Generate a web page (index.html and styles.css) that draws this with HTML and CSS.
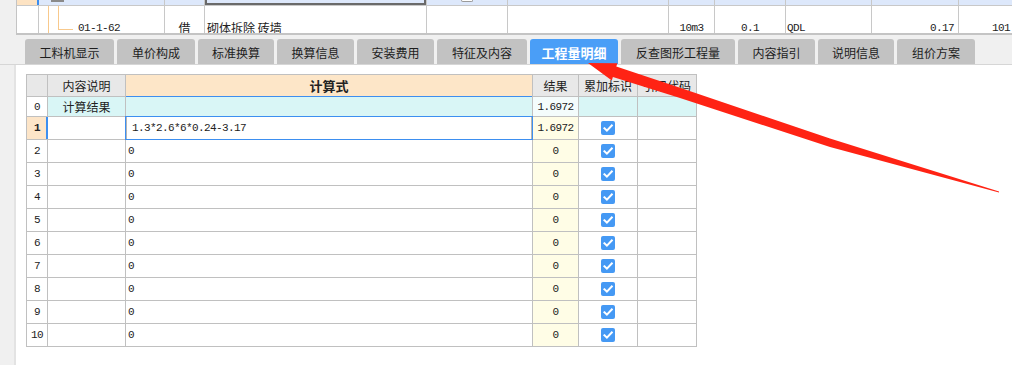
FILE: index.html
```html
<!DOCTYPE html>
<html lang="zh-CN">
<head>
<meta charset="utf-8">
<title>工程量明细</title>
<link rel="stylesheet" href="styles.css">
</head>
<body>
<div class="top-grid">
  <div class="g-row g-row-sel">
    <div class="c w1 c1-sel"></div>
    <div class="c w2"><span class="collapse-box"></span></div>
    <div class="c w3"></div>
    <div class="c w4 c4-edit"></div>
    <div class="c w5"><span class="mini-check"></span></div>
    <div class="c w6"></div>
    <div class="c w7"></div>
    <div class="c w8"></div>
    <div class="c w9"></div>
    <div class="c w10"></div>
    <div class="c w11"></div>
  </div>
  <div class="g-row g-row-main">
    <div class="c w1"></div>
    <div class="c w2 tree-cell"><span class="tree-v"></span><span class="tree-elbow"></span><span class="mono tree-text">01-1-62</span></div>
    <div class="c w3 center">借</div>
    <div class="c w4 pl2">砌体拆除 砖墙</div>
    <div class="c w5"></div>
    <div class="c w6"></div>
    <div class="c w7 center mono">10m3</div>
    <div class="c w8 center mono">0.1</div>
    <div class="c w9 mono pl1">QDL</div>
    <div class="c w10 right mono pr4">0.17</div>
    <div class="c w11 right mono pr2">101</div>
  </div>
</div>

<div class="tabs">
  <div class="tab t1">工料机显示</div>
  <div class="tab t2">单价构成</div>
  <div class="tab t3">标准换算</div>
  <div class="tab t4">换算信息</div>
  <div class="tab t5">安装费用</div>
  <div class="tab t6">特征及内容</div>
  <div class="tab t7 active">工程量明细</div>
  <div class="tab t8">反查图形工程量</div>
  <div class="tab t9">内容指引</div>
  <div class="tab t10">说明信息</div>
  <div class="tab t11">组价方案</div>
</div>

<div class="panel">
  <div class="sheet">
    <div class="h"></div>
    <div class="h">内容说明</div>
    <div class="h h-formula">计算式</div>
    <div class="h">结果</div>
    <div class="h">累加标识</div>
    <div class="h">引用代码</div>

    <div class="rn mono">0</div>
    <div class="cell r0 center">计算结果</div>
    <div class="cell r0"></div>
    <div class="cell r0-res mono center">1.6972</div>
    <div class="cell r0"></div>
    <div class="cell r0"></div>

    <div class="rn rn-cur mono">1</div>
    <div class="cell"></div>
    <div class="cell formula-edit mono">1.3*2.6*6*0.24-3.17</div>
    <div class="cell res mono center">1.6972</div>
    <div class="cell center"><svg class="chk" viewBox="0 0 14 14"><rect width="14" height="14" rx="2"/><path d="M3.4 7.3 L5.9 9.7 L10.8 4.5"/></svg></div>
    <div class="cell"></div>

    <div class="rn mono">2</div><div class="cell"></div><div class="cell formula mono">0</div><div class="cell res mono center">0</div><div class="cell center"><svg class="chk" viewBox="0 0 14 14"><rect width="14" height="14" rx="2"/><path d="M3.4 7.3 L5.9 9.7 L10.8 4.5"/></svg></div><div class="cell"></div>
    <div class="rn mono">3</div><div class="cell"></div><div class="cell formula mono">0</div><div class="cell res mono center">0</div><div class="cell center"><svg class="chk" viewBox="0 0 14 14"><rect width="14" height="14" rx="2"/><path d="M3.4 7.3 L5.9 9.7 L10.8 4.5"/></svg></div><div class="cell"></div>
    <div class="rn mono">4</div><div class="cell"></div><div class="cell formula mono">0</div><div class="cell res mono center">0</div><div class="cell center"><svg class="chk" viewBox="0 0 14 14"><rect width="14" height="14" rx="2"/><path d="M3.4 7.3 L5.9 9.7 L10.8 4.5"/></svg></div><div class="cell"></div>
    <div class="rn mono">5</div><div class="cell"></div><div class="cell formula mono">0</div><div class="cell res mono center">0</div><div class="cell center"><svg class="chk" viewBox="0 0 14 14"><rect width="14" height="14" rx="2"/><path d="M3.4 7.3 L5.9 9.7 L10.8 4.5"/></svg></div><div class="cell"></div>
    <div class="rn mono">6</div><div class="cell"></div><div class="cell formula mono">0</div><div class="cell res mono center">0</div><div class="cell center"><svg class="chk" viewBox="0 0 14 14"><rect width="14" height="14" rx="2"/><path d="M3.4 7.3 L5.9 9.7 L10.8 4.5"/></svg></div><div class="cell"></div>
    <div class="rn mono">7</div><div class="cell"></div><div class="cell formula mono">0</div><div class="cell res mono center">0</div><div class="cell center"><svg class="chk" viewBox="0 0 14 14"><rect width="14" height="14" rx="2"/><path d="M3.4 7.3 L5.9 9.7 L10.8 4.5"/></svg></div><div class="cell"></div>
    <div class="rn mono">8</div><div class="cell"></div><div class="cell formula mono">0</div><div class="cell res mono center">0</div><div class="cell center"><svg class="chk" viewBox="0 0 14 14"><rect width="14" height="14" rx="2"/><path d="M3.4 7.3 L5.9 9.7 L10.8 4.5"/></svg></div><div class="cell"></div>
    <div class="rn mono">9</div><div class="cell"></div><div class="cell formula mono">0</div><div class="cell res mono center">0</div><div class="cell center"><svg class="chk" viewBox="0 0 14 14"><rect width="14" height="14" rx="2"/><path d="M3.4 7.3 L5.9 9.7 L10.8 4.5"/></svg></div><div class="cell"></div>
    <div class="rn mono">10</div><div class="cell"></div><div class="cell formula mono">0</div><div class="cell res mono center">0</div><div class="cell center"><svg class="chk" viewBox="0 0 14 14"><rect width="14" height="14" rx="2"/><path d="M3.4 7.3 L5.9 9.7 L10.8 4.5"/></svg></div><div class="cell"></div>
  </div>
</div>

<svg class="arrow" width="1012" height="365" viewBox="0 0 1012 365">
  <polygon points="588,63 617.4,63.3 616.3,66.6 680,87.8 830,138.5 999,191.4 999,192.6 830,147 680,98 612.9,77 611.8,80.4"/>
</svg>
</body>
</html>
```

FILE: styles.css
```css
* { box-sizing: border-box; }
html, body { margin: 0; padding: 0; }
body {
  width: 1012px;
  height: 365px;
  overflow: hidden;
  position: relative;
  background: #f0f0f0;
  font-family: "Noto Sans CJK SC", "Noto Sans", sans-serif;
  font-size: 12px;
  color: #222;
}
.mono {
  font-family: "Liberation Mono", "DejaVu Sans Mono", monospace;
  font-size: 11px;
  letter-spacing: -0.6px;
}
.center { justify-content: center; text-align: center; }
.right { text-align: right; justify-content: flex-end; }
.pl1 { padding-left: 1px; }
.pl2 { padding-left: 2px; }
.pr2 { padding-right: 2px; }
.pr4 { padding-right: 4px; }

/* ---- top grid ---- */
.top-grid {
  margin-left: 16px;
  border-left: 1px solid #c4c4c4;
  border-bottom: 2px solid #c4c4c4;
  background: #fff;
}
.g-row { display: flex; }
.g-row-sel {
  height: 6px;
  background: #dde8fb;
  border-bottom: 1px solid #c8c8c8;
}
.g-row-main { height: 27px; }
.c {
  flex: none;
  border-right: 1px solid #c8c8c8;
  overflow: hidden;
  white-space: nowrap;
}
.g-row-main .c { padding-top: 14px; line-height: 16px; }
.w1 { width: 22px; }
.w2 { width: 126px; }
.w3 { width: 40px; }
.w4 { width: 222px; }
.w5 { width: 81px; }
.w6 { width: 161px; }
.w7 { width: 46px; }
.w8 { width: 71px; }
.w9 { width: 86px; }
.w10 { width: 87px; }
.w11 { flex: 1; border-right: none; }
.c1-sel {
  background: #fde3c3;
  border-right-color: #3b8def;
  box-shadow: inset -1px 0 0 #3b8def;
}
.c4-edit {
  box-shadow: inset 2px 0 0 #6a6a6a, inset -2px 0 0 #6a6a6a, inset 0 -2px 0 #6a6a6a;
}
.collapse-box {
  display: block;
  margin-left: 12px;
  width: 13px;
  height: 2px;
  background: #8a8a8a;
}
.mini-check {
  display: block;
  margin-left: 34px;
  width: 12px;
  height: 2px;
  border: 1px solid #9a9a9a;
  border-top: none;
  border-radius: 0 0 2px 2px;
  background: #fff;
}
.g-row-main .tree-cell {
  display: flex;
  align-items: flex-start;
  padding-top: 0;
}
.tree-v {
  flex: none;
  margin-left: 9px;
  width: 10px;
  height: 27px;
  border-left: 1px solid #f8c98c;
}
.tree-elbow {
  flex: none;
  width: 15px;
  height: 24px;
  border-left: 1px solid #f8c98c;
  border-bottom: 1px solid #f8c98c;
}
.tree-text { margin: 14px 0 0 5px; line-height: 16px; }

/* ---- tabs ---- */
.tabs {
  display: flex;
  gap: 3px;
  height: 30px;
  padding: 4px 0 0 25px;
  border-bottom: 1px solid #d6d6d6;
}
.tab {
  flex: none;
  height: 25px;
  padding-top: 2px;
  display: flex;
  align-items: center;
  justify-content: center;
  background: #c2c2c2;
  border-radius: 3px 3px 0 0;
  color: #1d1d1d;
  white-space: nowrap;
}
.t1 { width: 89px; }
.t2 { width: 78px; }
.t3 { width: 76px; }
.t4 { width: 77px; }
.t5 { width: 77px; }
.t6 { width: 90px; }
.t7 { width: 88px; }
.t8 { width: 114px; }
.t9 { width: 77px; }
.t10 { width: 76px; }
.t11 { width: 78px; }
.tab.active {
  background: #4a9ef7;
  color: #fff;
  font-weight: bold;
  font-size: 13px;
}

/* ---- panel / sheet ---- */
.panel {
  margin-left: 14px;
  border-left: 2px solid #e3e3e3;
  background: #fff;
  height: 300px;
  padding: 9px 0 0 10px;
}
.sheet {
  display: grid;
  width: max-content;
  grid-template-columns: 20px 77px 406px 45px 58px 58px;
  grid-template-rows: 21px 19px repeat(10, 22px);
  gap: 1px;
  padding: 1px;
  background: #c0c0c0;
}
.sheet > div {
  display: flex;
  align-items: center;
  background: #fff;
  white-space: nowrap;
  overflow: hidden;
}
.sheet > .h {
  background: #e8e8e8;
  justify-content: center;
  color: #222;
}
.sheet > .h-formula {
  background: #fde6c8;
  font-weight: bold;
  font-size: 13px;
  overflow: visible;
  box-shadow: 0 1px 0 #3d8ff0;
}
.sheet > .rn { justify-content: center; }
.sheet > .rn-cur {
  background: #fde5c8;
  font-weight: bold;
  overflow: visible;
  box-shadow: inset -1px 0 0 #3d8ff0, 1px 0 0 #3d8ff0;
}
.sheet > .r0 { background: #d9f6f6; }
.sheet > .r0-res { background: #f4fcfc; }
.sheet > .res { background: #fffde6; }
.sheet > .formula { padding-left: 2px; }
.sheet > .formula-edit {
  padding-left: 6px;
  overflow: visible;
  outline: 1px solid #3d8ff0;
  box-shadow: inset 1px 0 0 #b4b4b4, inset -1px 0 0 #b4b4b4;
}
.chk { width: 14px; height: 14px; display: block; }
.chk rect { fill: #4599f4; }
.chk path { fill: none; stroke: #fff; stroke-width: 2; stroke-linecap: square; }

/* ---- annotation arrow ---- */
.arrow {
  position: absolute;
  left: 0;
  top: 0;
  pointer-events: none;
}
.arrow polygon { fill: #ff2314; }
```
